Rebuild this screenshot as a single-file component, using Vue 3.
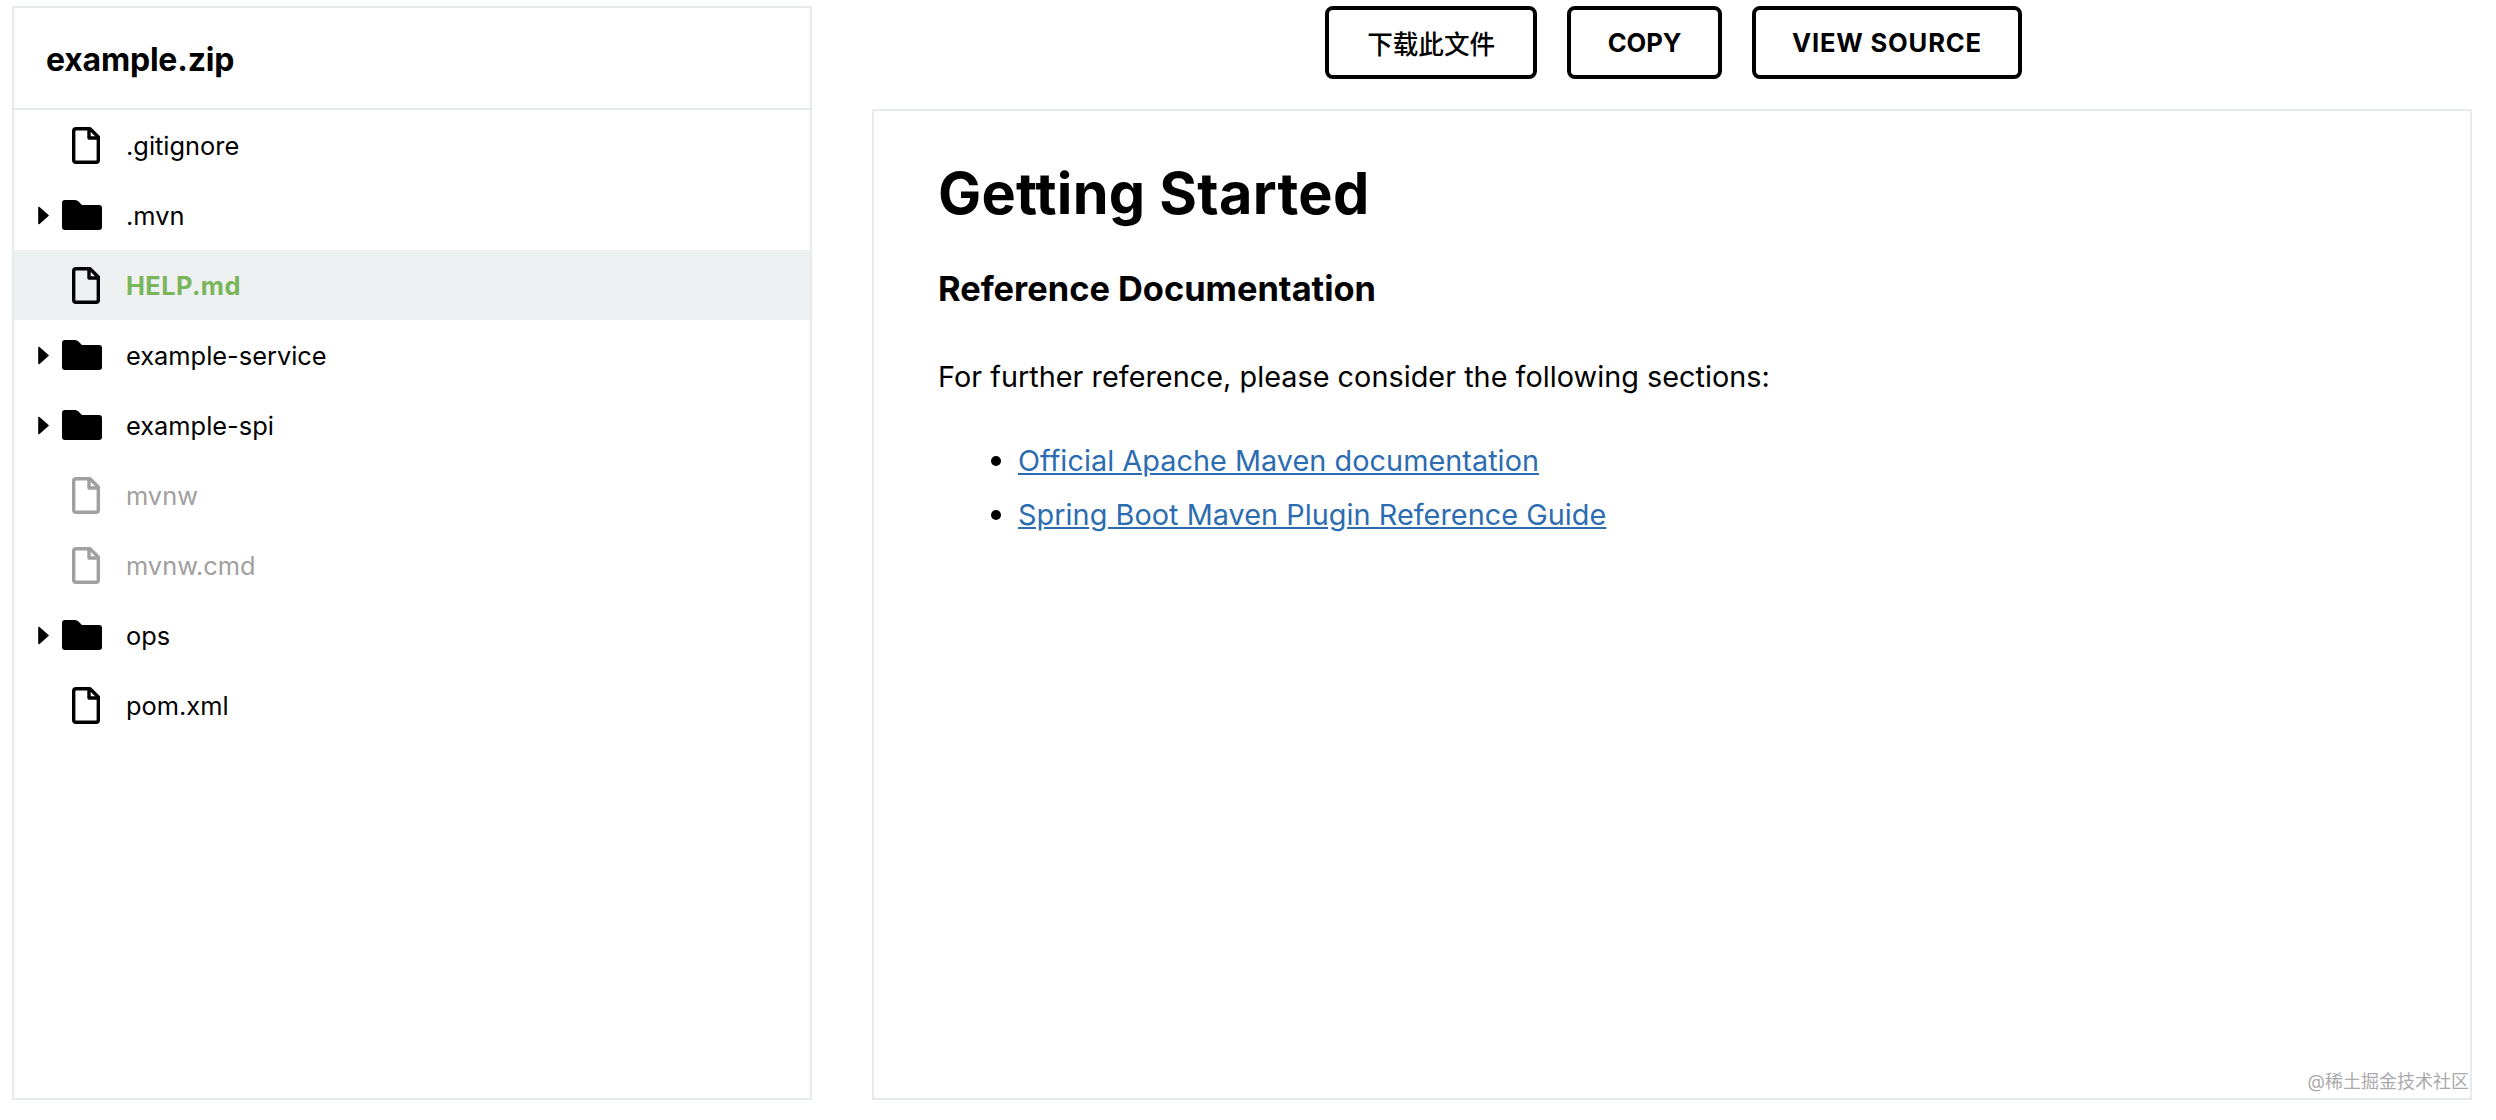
<script setup>
const items = [
  { name: '.gitignore', type: 'file' },
  { name: '.mvn', type: 'dir' },
  { name: 'HELP.md', type: 'file', active: true },
  { name: 'example-service', type: 'dir' },
  { name: 'example-spi', type: 'dir' },
  { name: 'mvnw', type: 'file', muted: true },
  { name: 'mvnw.cmd', type: 'file', muted: true },
  { name: 'ops', type: 'dir' },
  { name: 'pom.xml', type: 'file' }
]
</script>

<template>
  <div class="page">
    <aside class="tree">
      <header class="tree-head">example.zip</header>
      <ul class="tree-list">
        <li
          v-for="item in items"
          :key="item.name"
          class="row"
          :class="{ active: item.active, muted: item.muted }"
        >
          <span class="caret-slot">
            <svg v-if="item.type === 'dir'" width="11" height="19" viewBox="0 0 11 19">
              <path d="M1 1.5 L10 9.5 L1 17.5 Z" fill="#000" stroke="#000" stroke-width="1.6" stroke-linejoin="round" />
            </svg>
          </span>
          <span class="icon-slot">
            <svg v-if="item.type === 'dir'" width="40" height="30" viewBox="0 0 40 30">
              <path d="M3 0 H13 Q15 0 16.5 1.5 L20 5 H37 Q40 5 40 8 V27 Q40 30 37 30 H3 Q0 30 0 27 V3 Q0 0 3 0 Z" fill="#000" />
            </svg>
            <svg v-else class="file-icon" width="28" height="37" viewBox="0 0 28 37" fill="none" stroke="currentColor" stroke-width="3.4" stroke-linejoin="round">
              <path d="M4 1.7 H18 L26.3 10 V33 Q26.3 35.3 24 35.3 H4 Q1.7 35.3 1.7 33 V4 Q1.7 1.7 4 1.7 Z" />
              <path d="M17 2 V11 H26" />
            </svg>
          </span>
          <span class="label">{{ item.name }}</span>
        </li>
      </ul>
    </aside>

    <main class="main">
      <div class="toolbar">
        <button class="btn btn-cjk">下载此文件</button>
        <button class="btn btn-copy">COPY</button>
        <button class="btn btn-source">VIEW SOURCE</button>
      </div>
      <article class="doc">
        <h1>Getting Started</h1>
        <h2>Reference Documentation</h2>
        <p>For further reference, please consider the following sections:</p>
        <ul>
          <li><a href="#">Official Apache Maven documentation</a></li>
          <li><a href="#">Spring Boot Maven Plugin Reference Guide</a></li>
        </ul>
        <span class="mark">@稀土掘金技术社区</span>
      </article>
    </main>
  </div>
</template>

<style>
html, body { background: #fff; }
</style>

<style scoped>
.page {
  box-sizing: border-box;
  width: 2496px;
  height: 1120px;
  padding: 6px 24px 20px 12px;
  display: flex;
  gap: 60px;
  font-family: Inter, "Noto Sans CJK SC", sans-serif;
  color: #000;
}
.tree {
  box-sizing: border-box;
  width: 800px;
  border: 2px solid #e6eaea;
  display: flex;
  flex-direction: column;
}
.tree-head {
  height: 102px;
  box-sizing: border-box;
  padding: 2px 0 0 32px;
  display: flex;
  align-items: center;
  font-size: 32px;
  font-weight: 700;
  letter-spacing: -0.2px;
  border-bottom: 2px solid #e6eaea;
}
.tree-list {
  list-style: none;
  margin: 0;
  padding: 0;
}
.row {
  height: 70px;
  display: flex;
  align-items: center;
  padding-left: 24px;
  font-size: 25.4px;
}
.row.active { background: #edf1f2; }
.row.active .label { color: #7ab55c; font-weight: 700; letter-spacing: 0.4px; }
.row.muted { color: #a0a0a0; }
.caret-slot {
  width: 11px;
  display: flex;
}
.icon-slot {
  width: 40px;
  margin-left: 13px;
  display: flex;
}
.file-icon { margin-left: 10px; }
.label { margin-left: 24px; }
.main {
  flex: 1;
  display: flex;
  flex-direction: column;
}
.toolbar {
  height: 103px;
  display: flex;
  justify-content: center;
  gap: 30px;
  align-items: flex-start;
  padding-left: 3px;
}
.btn {
  height: 73px;
  padding: 0 36px;
  background: #fff;
  border: 4px solid #000;
  border-radius: 8px;
  font-family: Inter, "Noto Sans CJK SC", sans-serif;
  font-size: 25.6px;
  font-weight: 700;
  color: #000;
}
.btn-cjk { font-weight: 500; padding: 0 38px; }
.btn-copy { padding: 0 36.5px; }
.btn-source { letter-spacing: 0.8px; padding: 0 36px; }
.doc {
  flex: 1;
  position: relative;
  border: 2px solid #e6eaea;
  padding: 46px 64px;
}
h1 {
  margin: 0;
  font-size: 57.6px;
  line-height: 72px;
  font-weight: 700;
  letter-spacing: 0.27px;
}
h2 {
  margin: 38px 0 0;
  font-size: 34.4px;
  line-height: 44px;
  font-weight: 700;
}
p {
  margin: 44px 0 0;
  font-size: 28.8px;
  line-height: 44px;
  letter-spacing: 0.03px;
}
.doc ul {
  list-style: none;
  margin: 35px 0 0;
  padding-left: 80px;
  font-size: 28.8px;
  letter-spacing: 0.05px;
}
.doc li {
  position: relative;
  line-height: 54px;
}
.doc li::before {
  content: "";
  position: absolute;
  left: -27px;
  top: 22px;
  width: 10px;
  height: 10px;
  border-radius: 50%;
  background: #000;
}
a { color: #2c6cb0; }
.mark {
  position: absolute;
  right: 1px;
  bottom: 5px;
  font-size: 18px;
  color: #aaa;
}
</style>
